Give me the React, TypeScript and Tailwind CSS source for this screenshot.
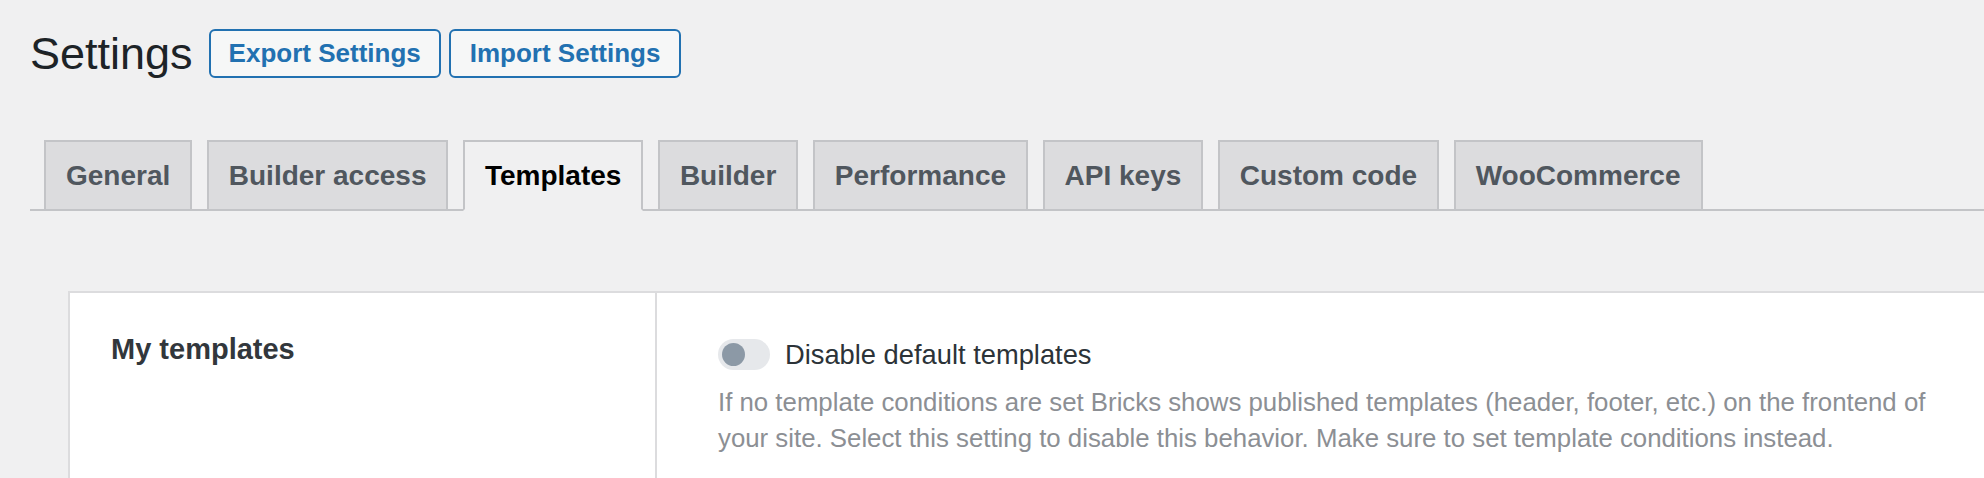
import React from "react";

const tabs = [
  "General",
  "Builder access",
  "Templates",
  "Builder",
  "Performance",
  "API keys",
  "Custom code",
  "WooCommerce",
];

export default function App() {
  return (
    <div
      className="min-h-screen w-full overflow-hidden bg-[#f0f0f1]"
      style={{ fontFamily: '"Liberation Sans", Arial, sans-serif' }}
    >
      {/* Header */}
      <div className="flex items-center pt-[29px] pl-[30px]">
        <h1 className="text-[45px] leading-none font-normal text-[#1d2327]">Settings</h1>
        <button className="ml-[16px] flex h-[49px] items-center rounded-[6px] border-2 border-[#2271b1] bg-[#f6f7f7] px-[18px] text-[26px] font-bold text-[#2271b1]">
          Export Settings
        </button>
        <button className="ml-[8px] flex h-[49px] items-center rounded-[6px] border-2 border-[#2271b1] bg-[#f6f7f7] px-[19px] text-[26px] font-bold text-[#2271b1]">
          Import Settings
        </button>
      </div>

      {/* Tabs */}
      <div className="mt-[62px] ml-[30px] flex border-b-2 border-[#c3c4c7]">
        {tabs.map((t, i) => {
          const active = t === "Templates";
          const margin = i === 0 ? "ml-[14px]" : "ml-[14.5px]";
          return (
            <div
              key={t}
              className={
                margin +
                (active
                  ? " -mb-[2px] flex h-[71px] items-center border-2 border-[#c3c4c7] border-b-[#f0f0f1] bg-[#f0f0f1] px-[20px] text-[28px] font-bold text-black"
                  : " -mb-[2px] flex h-[71px] items-center border-2 border-[#c3c4c7] bg-[#dcdcde] px-[20px] text-[28px] font-bold text-[#50575e]")
              }
            >
              {t}
            </div>
          );
        })}
      </div>

      {/* Card */}
      <div className="mt-[80px] ml-[68px] flex border-2 border-r-0 border-[#dcdcde] bg-white">
        <div className="w-[587px] shrink-0 border-r-2 border-[#dcdcde] pl-[41px] pt-[39px]">
          <h2 className="text-[29px] leading-[34px] font-bold text-[#32373c]">My templates</h2>
        </div>
        <div className="flex-1 pl-[61px] pt-[46px] pb-[80px]">
          <div className="flex items-center">
            <div className="flex h-[31px] w-[52px] items-center rounded-full bg-[#e6e8eb] pl-[4px]">
              <div className="h-[23px] w-[23px] rounded-full bg-[#8c99a6]" />
            </div>
            <span className="ml-[15px] text-[27.3px] leading-none text-[#2c3338]">
              Disable default templates
            </span>
          </div>
          <p className="mt-[14px] w-[1230px] text-[25.8px] leading-[36px] text-[#8c8f94]">
            If no template conditions are set Bricks shows published templates (header, footer, etc.) on the frontend of your site. Select this setting to disable this behavior. Make sure to set template conditions instead.
          </p>
        </div>
      </div>
    </div>
  );
}
